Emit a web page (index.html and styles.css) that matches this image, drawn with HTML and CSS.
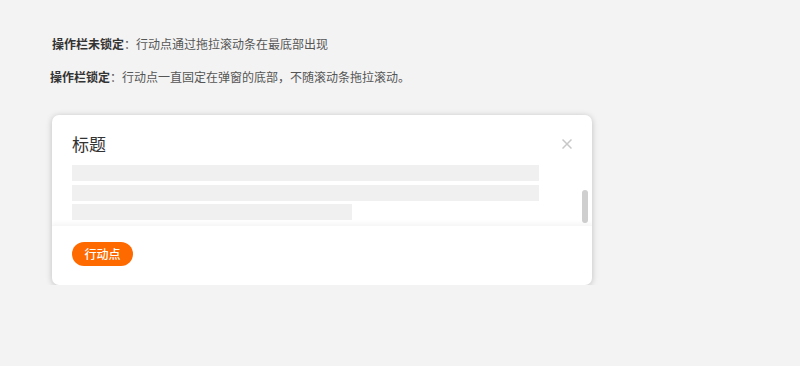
FILE: index.html
```html
<!DOCTYPE html>
<html lang="zh">
<head>
<meta charset="utf-8">
<title>操作栏</title>
<link rel="stylesheet" href="styles.css">
</head>
<body>
<div class="page">
  <p class="note note-first"><b class="label">操作栏未锁定</b>：行动点通过拖拉滚动条在最底部出现</p>
  <p class="note"><b class="label">操作栏锁定</b>：行动点一直固定在弹窗的底部，不随滚动条拖拉滚动。</p>
  <div class="dialog">
    <div class="dialog-main">
      <div class="dialog-header">
        <h2 class="dialog-title">标题</h2>
        <svg class="dialog-close" width="10" height="10" viewBox="0 0 10 10"><path d="M0.5 0.5L9.5 9.5M9.5 0.5L0.5 9.5" stroke="#c8c8c8" stroke-width="1.5" fill="none"/></svg>
      </div>
      <div class="dialog-body">
        <div class="bar"></div>
        <div class="bar bar-2"></div>
        <div class="bar bar-3"></div>
      </div>
      <div class="scroll-thumb"></div>
    </div>
    <div class="dialog-footer">
      <button class="btn-primary">行动点</button>
    </div>
  </div>
</div>
</body>
</html>
```
FILE: styles.css
```css
html, body {
  margin: 0;
  padding: 0;
  background: #f3f3f3;
  font-family: "Noto Sans CJK SC", "Noto Sans", sans-serif;
}
.page {
  padding: 34px 0 0 52px;
}
.note {
  margin: 13px 0 0 -2px;
  font-size: 12px;
  line-height: 20px;
  color: #555;
}
.note-first {
  margin: 0;
}
.label {
  font-weight: 700;
  color: #333;
}
.dialog {
  margin-top: 28px;
  width: 540px;
  height: 170px;
  background: #fff;
  border-radius: 7px;
  box-shadow: 0 1px 6px rgba(0, 0, 0, 0.22);
  display: flex;
  flex-direction: column;
  overflow: hidden;
}
.dialog-main {
  position: relative;
  height: 110px;
  overflow: hidden;
}
.dialog-header {
  display: flex;
  align-items: center;
  justify-content: space-between;
  padding: 17px 20px 0 20px;
  height: 24px;
}
.dialog-title {
  margin: 0;
  font-size: 17px;
  line-height: 24px;
  font-weight: 400;
  color: #333;
}
.dialog-close {
  display: block;
}
.dialog-body {
  padding: 9px 0 0 20px;
}
.bar {
  width: 467px;
  height: 16px;
  background: #f0f0f0;
}
.bar-2 {
  margin-top: 4px;
}
.bar-3 {
  margin-top: 3px;
  width: 280px;
}
.scroll-thumb {
  position: absolute;
  top: 75px;
  right: 4px;
  width: 6px;
  height: 33px;
  border-radius: 3px;
  background: #cfcfcf;
}
.dialog-footer {
  flex: 1;
  padding: 16px 20px 0 20px;
  box-shadow: 0 -2px 4px rgba(0, 0, 0, 0.04);
  border-top: 1px solid #f7f7f7;
  position: relative;
}
.btn-primary {
  display: block;
  width: 61px;
  height: 24px;
  border: none;
  border-radius: 12px;
  background: #ff6a00;
  color: #fff;
  font-family: "Noto Sans CJK SC", "Noto Sans", sans-serif;
  font-size: 12px;
  font-weight: 500;
  line-height: 24px;
  padding: 0;
  text-align: center;
}
```
